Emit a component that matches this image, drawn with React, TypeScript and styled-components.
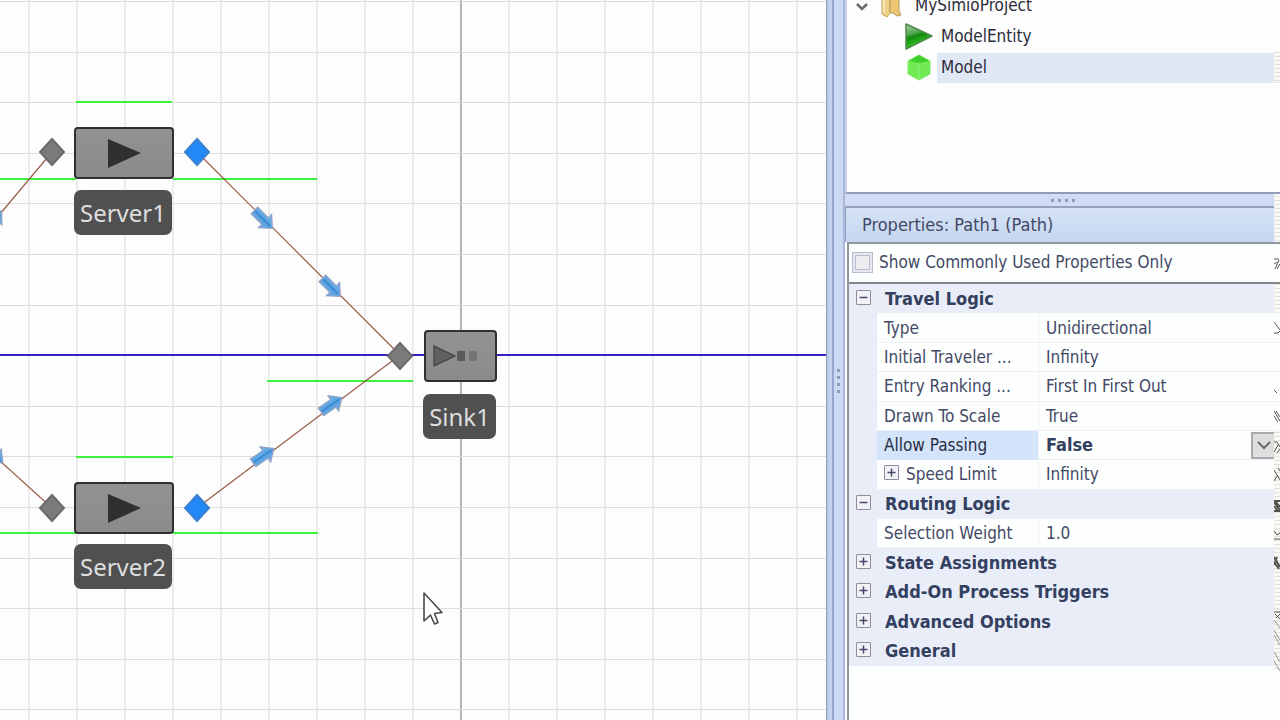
import React from "react";
import styled, { createGlobalStyle } from "styled-components";

const GlobalStyle = createGlobalStyle`
  *, *::before, *::after { box-sizing: border-box; }
  html, body, #root { height: 100%; }
  body {
    margin: 0;
    overflow: hidden;
    background: #fdfdfd;
    color: #434965;
    font: 17px/22px "DejaVu Sans Condensed", "DejaVu Sans", sans-serif;
  }
`;

const Window = styled.div`
  position: relative;
  display: flex;
  height: 100vh;
  overflow: hidden;
`;

/* ---------- facility canvas ---------- */

const Canvas = styled.main`
  position: relative;
  flex: 1;
  min-width: 0;
  overflow: hidden;
  background: #fdfdfd;
`;

const Drawing = styled.svg`
  position: absolute;
  inset: 0;
  width: 100%;
  height: 100%;
`;

const Block = styled.div<{ $x: number; $y: number; $w: number }>`
  position: absolute;
  left: ${(p) => p.$x}px;
  top: ${(p) => p.$y}px;
  width: ${(p) => p.$w}px;
  height: 52px;
  border: 2px solid #303030;
  border-radius: 4px;
  background: linear-gradient(#929292, #8b8b8b);

  svg {
    display: block;
    width: 100%;
    height: 100%;
  }
`;

const NodeLabel = styled.div<{ $x: number; $y: number; $w: number }>`
  position: absolute;
  left: ${(p) => p.$x}px;
  top: ${(p) => p.$y}px;
  width: ${(p) => p.$w}px;
  height: 45px;
  border-radius: 7px;
  background: #505050;
  color: #dedede;
  font: 24px/45px "Noto Sans", sans-serif;
  text-align: center;
  white-space: nowrap;
`;

const Pointer = styled.svg`
  position: absolute;
  left: 421px;
  top: 590px;
  width: 24px;
  height: 38px;
`;

const columns = Array.from({ length: 60 }, (_, i) => 29 + i * 48);
const rows = Array.from({ length: 40 }, (_, i) => Math.round(1 + i * 50.6));

const queues = [
  [76, 172, 102],
  [0, 76, 179],
  [173, 317, 179],
  [76, 173, 457],
  [0, 77, 533],
  [173, 318, 533],
  [267, 413, 381],
];

const links = ["M0 214L52 152", "M197 152L400 355", "M0 461L52 508", "M197 508L400 355"];

const arrows = [
  [263, 219, 45],
  [331, 287, 45],
  [331, 405, -35],
  [263, 456, -35],
  [-7, 221, -50],
  [-7, 454, 42],
];

const diamonds: [number, number, boolean][] = [
  [52, 152, false],
  [197, 152, true],
  [52, 508, false],
  [197, 508, true],
  [400, 356, false],
];

function Facility() {
  return (
    <Canvas>
      <Drawing aria-hidden="true">
        <defs>
          <linearGradient id="arrowFill" x1="0" y1="0" x2="0" y2="1">
            <stop offset="0" stopColor="#7dbdf0" />
            <stop offset="0.5" stopColor="#4d9fe4" />
            <stop offset="1" stopColor="#74b2e8" />
          </linearGradient>
        </defs>
        {columns.map((x) => (
          <rect key={x} x={x - 1} y="0" width="2" height="100%" fill={x === 461 ? "#b4b4b6" : "#ececed"} />
        ))}
        {rows.map((y) => (
          <rect key={y} x="0" y={y} width="100%" height="1" fill="#dddddf" />
        ))}
        <rect x="0" y="354" width="100%" height="2" fill="#3423c4" />
        {queues.map(([a, b, y]) => (
          <rect key={`${a}-${y}`} x={a} y={y - 1} width={b - a} height="2" fill="#3df03c" />
        ))}
        {links.map((d) => (
          <path key={d} d={d} stroke="#9a5a48" strokeWidth="1.2" fill="none" />
        ))}
        {arrows.map(([x, y, a]) => (
          <g key={`${x}-${y}`} transform={`translate(${x} ${y}) rotate(${a})`}>
            <path d="M-12-4.500H3V-9L13 0L3 9V4.500H-12Z" fill="url(#arrowFill)" stroke="#8fa3c8" strokeWidth="1.500" />
            <path d="M-11 0H10" stroke="#3d80c2" strokeWidth="1.300" />
          </g>
        ))}
        {diamonds.map(([x, y, active]) => (
          <path
            key={`${x}-${y}`}
            d={`M${x} ${y - 13}L${x + 12} ${y}L${x} ${y + 13}L${x - 12} ${y}Z`}
            fill={active ? "#2289f6" : "#7b7b7b"}
            stroke={active ? "#3a80d0" : "#6a6a6a"}
            strokeWidth="2"
          />
        ))}
      </Drawing>

      {[
        { name: "Server1", y: 127, label: 190 },
        { name: "Server2", y: 482, label: 544 },
      ].map((s) => (
        <React.Fragment key={s.name}>
          <Block $x={74} $y={s.y} $w={100}>
            <svg viewBox="0 0 96 48" aria-hidden="true">
              <path d="M32 10V39L65 24Z" fill="#303030" />
            </svg>
          </Block>
          <NodeLabel $x={74} $y={s.label} $w={98}>{s.name}</NodeLabel>
        </React.Fragment>
      ))}
      <Block $x={424} $y={330} $w={73}>
        <svg viewBox="0 0 69 48" aria-hidden="true">
          <path d="M8 14V34L29 24Z" fill="#606060" stroke="#444" strokeWidth="1.200" />
          <rect x="31" y="19" width="8" height="10" fill="#5a5a5a" />
          <rect x="43" y="19" width="8" height="10" fill="#747474" />
        </svg>
      </Block>
      <NodeLabel $x={423} $y={394} $w={73}>Sink1</NodeLabel>

      <Pointer viewBox="0 0 24 38" aria-hidden="true">
        <path
          d="M3 3V31L9.500 25L13.500 34L17 32.500L13.500 23.500L21 22.500Z"
          fill="#fff"
          stroke="#4a4a4a"
          strokeWidth="1.600"
          strokeLinejoin="round"
        />
      </Pointer>
    </Canvas>
  );
}

/* ---------- side panels ---------- */

const Splitter = styled.div`
  display: flex;
  align-items: center;
  justify-content: center;
  flex: 0 0 19px;
  padding: 42px 0 0 7px;
  background: linear-gradient(
    90deg,
    #8a9dc2 0 1px,
    #b9cae6 1px 3px,
    #c3d3ec 3px 6px,
    #94a6cc 6px 8px,
    #cdd8f2 8px 17px,
    #a9b7da 17px 19px
  );
`;

const Dots = styled.svg`
  display: block;
  fill: #8d9ab9;
`;

const Side = styled.aside`
  display: flex;
  flex-direction: column;
  flex: 0 0 435px;
  min-width: 0;
  background: #fdfdfd;
`;

const TreePanel = styled.nav`
  flex: 0 0 194px;
  overflow: hidden;
  border-left: 2px solid #c6d1ea;
  border-bottom: 2px solid #8f9dbb;
  background: #fdfdfe;
`;

const Tree = styled.ul`
  margin: -10px 0 0;
  padding: 0;
  list-style: none;
`;

const TreeItem = styled.li<{ $depth: number }>`
  display: flex;
  align-items: center;
  height: 31px;
  gap: ${(p) => (p.$depth ? 4 : 8)}px;
  padding-left: ${(p) => (p.$depth ? 58 : 8)}px;
`;

const TreeName = styled.a<{ $selected?: boolean }>`
  flex: 1;
  height: 30px;
  padding-left: 4px;
  background: ${(p) => (p.$selected ? "#e1e8f5" : "transparent")};
  color: #2c2c38;
  line-height: 29px;
  text-decoration: none;
`;

const Grip = styled.div`
  display: flex;
  align-items: center;
  justify-content: center;
  flex: 0 0 12px;
  background: #cfdcf3;
`;

const PanelTitle = styled.h2`
  flex: 0 0 36px;
  margin: 0;
  padding-left: 16px;
  border-top: 2px solid #94a1be;
  border-left: 1px solid #94a1be;
  background: linear-gradient(#d6e3f7, #c5d6ef);
  font-size: 18px;
  font-weight: 400;
  line-height: 34px;
`;

const Body = styled.div`
  flex: 1;
  margin-left: 2px;
  border-left: 2px solid #8f959f;
  border-top: 2px solid #8f959f;
  background: #fdfefe;
`;

const Filter = styled.label`
  display: flex;
  align-items: center;
  height: 40px;
  gap: 6px;
  padding: 0 0 2px 3px;
  border-bottom: 2px solid #84868f;
`;

const Check = styled.input`
  appearance: none;
  width: 21px;
  height: 21px;
  margin: 0;
  border: 1px solid #b9bccf;
  background: #ececf1;
  box-shadow: inset 0 0 0 2px #e6e7f2, inset 0 0 0 3px #bcbdc9;
`;

const Grid = styled.table`
  width: 100%;
  height: 382px;
  border-collapse: separate;
  border-spacing: 0;
  table-layout: fixed;

  tr { height: 29px; }

  th, td {
    padding: 0;
    overflow: hidden;
    text-align: left;
    white-space: nowrap;
  }
`;

const Gutter = styled.td`
  background: #e9edf8;
`;

const Category = styled.th`
  background: #e9edf8;
  color: #33405f;
  font-size: 18px;

  &:nth-child(2) { padding-left: 8px; }
`;

const Name = styled.th<{ $active?: boolean }>`
  border-bottom: 1px solid ${(p) => (p.$active ? "#d4e4fa" : "#eef0f7")};
  border-right: 1px solid #eef0f7;
  background: ${(p) => (p.$active ? "#d4e4fa" : "#fdfefe")};
  color: ${(p) => (p.$active ? "#262d44" : "inherit")};
  font-weight: 400;

  && { padding-left: 7px; }
`;

const Value = styled.td`
  border-bottom: 1px solid #eef0f7;

  && { padding-left: 7px; }
`;

const Toggle = styled.button`
  display: inline-block;
  width: 15px;
  height: 15px;
  margin: 0 7px;
  padding: 0;
  border: 1px solid #8c8f9b;
  border-radius: 1px;
  background: #f2f2f6;
  vertical-align: 1px;

  svg {
    display: block;
    stroke: #45496b;
    stroke-width: 1.5;
  }

  ${Name} & { margin: 0 7px 0 0; }
`;

const Picker = styled.div`
  display: flex;
  height: 27px;
`;

const Choice = styled.select`
  appearance: none;
  flex: 1;
  min-width: 0;
  padding: 0;
  border: 0;
  background: transparent;
  color: #33405f;
  font: inherit;
  font-size: 18px;
  font-weight: 700;
`;

const DropArrow = styled.span`
  display: flex;
  align-items: center;
  justify-content: center;
  flex: 0 0 29px;
  padding-right: 4px;
  border: 2px solid #a9abb0;
  background: #dededf;
`;

const EdgeStrip = styled.svg`
  position: absolute;
  top: 0;
  right: 0;
  width: 6px;
  height: 720px;
`;

type Row = { name: string; value?: string; toggle?: "+" | "-"; active?: boolean };

const properties: Row[] = [
  { name: "Travel Logic", toggle: "-" },
  { name: "Type", value: "Unidirectional" },
  { name: "Initial Traveler ...", value: "Infinity" },
  { name: "Entry Ranking ...", value: "First In First Out" },
  { name: "Drawn To Scale", value: "True" },
  { name: "Allow Passing", value: "False", active: true },
  { name: "Speed Limit", value: "Infinity", toggle: "+" },
  { name: "Routing Logic", toggle: "-" },
  { name: "Selection Weight", value: "1.0" },
  { name: "State Assignments", toggle: "+" },
  { name: "Add-On Process Triggers", toggle: "+" },
  { name: "Advanced Options", toggle: "+" },
  { name: "General", toggle: "+" },
];

function Expander({ sign, name }: { sign: "+" | "-"; name: string }) {
  return (
    <Toggle type="button" aria-label={name} aria-expanded={sign === "-"}>
      <svg width="13" height="13" aria-hidden="true">
        <path d={sign === "+" ? "M2.500 6.500H10.500M6.500 2.500V10.500" : "M2.500 6.500H10.500"} />
      </svg>
    </Toggle>
  );
}

function PropertyRow({ row }: { row: Row }) {
  if (row.value === undefined) {
    return (
      <tr>
        <Category>{row.toggle && <Expander sign={row.toggle} name={row.name} />}</Category>
        <Category colSpan={2} scope="rowgroup">{row.name}</Category>
      </tr>
    );
  }
  return (
    <tr>
      <Gutter />
      <Name scope="row" $active={row.active}>
        {row.toggle && <Expander sign={row.toggle} name={row.name} />}
        {row.name}
      </Name>
      <Value>
        {row.active ? (
          <Picker>
            <Choice aria-label={row.name} defaultValue="False">
              <option>True</option>
              <option>False</option>
            </Choice>
            <DropArrow>
              <svg width="16" height="10" aria-hidden="true">
                <path d="M2 2L8 8L14 2" fill="none" stroke="#6c6c6c" strokeWidth="2" />
              </svg>
            </DropArrow>
          </Picker>
        ) : (
          row.value
        )}
      </Value>
    </tr>
  );
}

function ChevronIcon() {
  return (
    <svg width="14" height="12" aria-hidden="true">
      <path d="M2 4L7 9L12 4" fill="none" stroke="#6a6a72" strokeWidth="2.500" />
    </svg>
  );
}

function FolderIcon() {
  return (
    <svg width="26" height="24" aria-hidden="true">
      <path d="M5 2L13 0V19L10 23L5 20Z" fill="#f0cf86" stroke="#c9a75f" />
      <path d="M13 1H22V17L24 21L20 22L16 19H13Z" fill="#edc673" stroke="#b39a66" />
      <path d="M7 4V19" stroke="#fae6b4" strokeWidth="2" />
    </svg>
  );
}

function EntityIcon() {
  return (
    <svg width="28" height="30" aria-hidden="true">
      <defs>
        <linearGradient id="entityFill" x1="0.1" y1="0" x2="0.4" y2="1">
          <stop offset="0" stopColor="#a5cfa2" />
          <stop offset="0.4" stopColor="#4fa64a" />
          <stop offset="0.5" stopColor="#158a0f" />
          <stop offset="1" stopColor="#35d81e" />
        </linearGradient>
      </defs>
      <path d="M1 2V27L27 14Z" fill="url(#entityFill)" stroke="#4f8a4c" strokeWidth="1.500" strokeLinejoin="round" />
    </svg>
  );
}

function CubeIcon() {
  return (
    <svg width="28" height="28" aria-hidden="true">
      <path d="M14 1L25 7V20L14 26L3 20V7Z" fill="#72ea54" stroke="#7be866" strokeLinejoin="round" />
      <path d="M14 1L24 7L14 9L4 7Z" fill="#3fcf2c" />
      <path d="M14 10V25" stroke="#86ee6c" strokeWidth="1.500" />
    </svg>
  );
}

export default function App() {
  return (
    <Window>
      <GlobalStyle />
      <Facility />
      <Splitter>
        <Dots width="4" height="24" aria-hidden="true">
          {[0, 7, 14, 21].map((y) => (
            <rect key={y} y={y} width="3" height="3" />
          ))}
        </Dots>
      </Splitter>
      <Side>
        <TreePanel aria-label="Project">
          <Tree>
            <TreeItem $depth={0}>
              <ChevronIcon />
              <FolderIcon />
              <TreeName href="#project">MySimioProject</TreeName>
            </TreeItem>
            <TreeItem $depth={1}>
              <EntityIcon />
              <TreeName href="#entity">ModelEntity</TreeName>
            </TreeItem>
            <TreeItem $depth={1}>
              <CubeIcon />
              <TreeName href="#model" $selected>Model</TreeName>
            </TreeItem>
          </Tree>
        </TreePanel>
        <Grip>
          <Dots width="24" height="3" aria-hidden="true">
            {[0, 7, 14, 21].map((x) => (
              <rect key={x} x={x} width="3" height="3" />
            ))}
          </Dots>
        </Grip>
        <PanelTitle>Properties: Path1 (Path)</PanelTitle>
        <Body>
          <Filter>
            <Check type="checkbox" />
            Show Commonly Used Properties Only
          </Filter>
          <Grid>
            <colgroup>
              <col style={{ width: 28 }} />
              <col style={{ width: 162 }} />
              <col />
            </colgroup>
            <tbody>
              {properties.map((row) => (
                <PropertyRow key={row.name} row={row} />
              ))}
            </tbody>
          </Grid>
        </Body>
      </Side>
      <EdgeStrip viewBox="0 0 6 720" aria-hidden="true">
        <defs>
          <pattern id="scan" width="6" height="4" patternUnits="userSpaceOnUse">
            <rect width="6" height="4" fill="#f8f8f4" />
            <rect width="6" height="1" fill="#e3e2dc" />
          </pattern>
        </defs>
        <rect y="52" width="6" height="30" fill="url(#scan)" />
        <rect y="194" width="6" height="48" fill="url(#scan)" />
        <rect y="284" width="6" height="28" fill="url(#scan)" />
        <rect y="430" width="6" height="60" fill="url(#scan)" />
        <rect y="490" width="6" height="180" fill="url(#scan)" />
        <g fill="none" stroke="#55534e" strokeWidth="1">
          <path d="M0 259H5M1 269L5 260M3 269L6 264M0 264L3 262" />
          <path d="M0 322L6 330M0 333H4L6 331" />
          <path d="M0 390L3 393" />
          <path d="M0 411L6 421M2 411L6 417M0 416L4 422" />
          <path d="M0 442H3L6 447M0 452L4 445M3 453L6 449" />
          <path d="M0 470L6 480M0 481L3 476M4 468L6 471" />
          <path d="M0 501H6M0 502L6 510M2 502L6 507M0 506L4 511M0 511H6" strokeWidth="2" />
          <path d="M0 531L3 535L6 533M0 539H6" />
          <path d="M0 557L6 567M0 562L5 569M3 557L0 565" strokeWidth="2" />
          <path d="M0 612H6M1 614L6 619M6 614L2 618" />
          <path d="M0 620L6 628M0 630L6 640M0 635L6 645M0 652L6 662M0 661L6 671" stroke="#96958f" />
        </g>
      </EdgeStrip>
    </Window>
  );
}
